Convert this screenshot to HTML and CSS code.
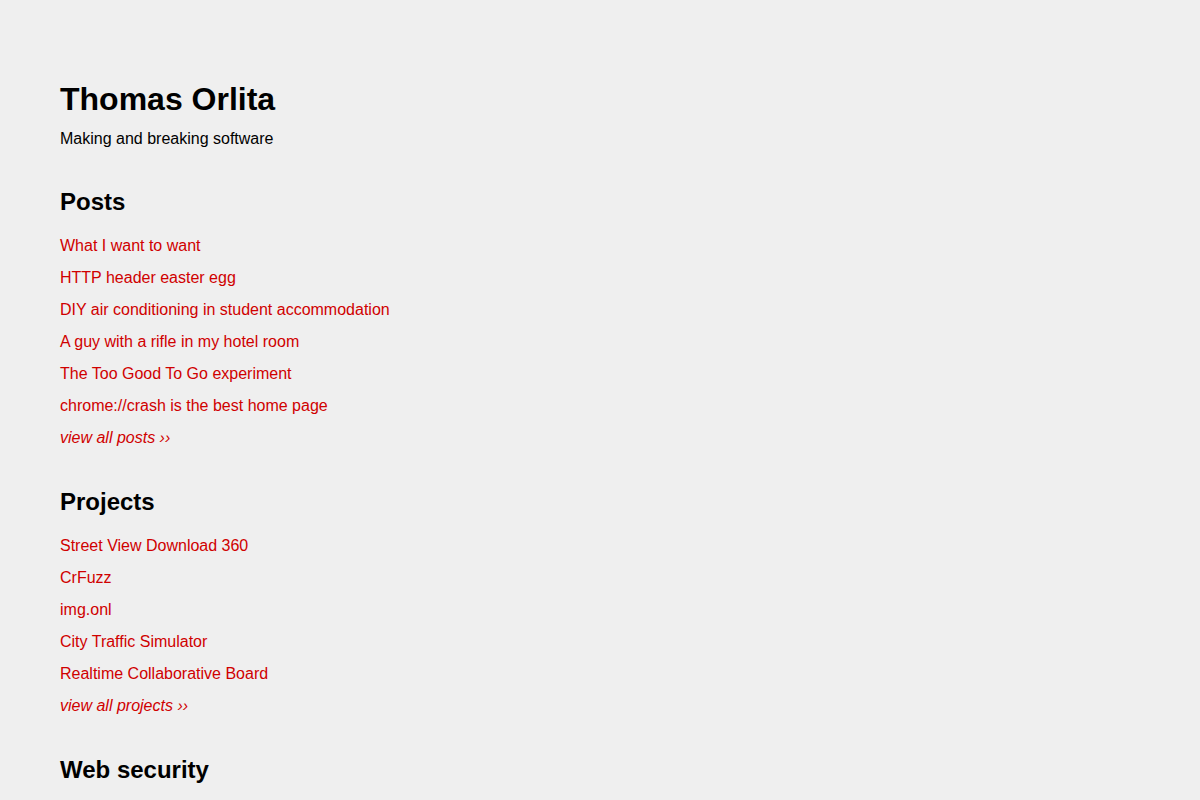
FILE: index.html
```html
<html lang="en">
<head>
  <meta charset="UTF-8" />
  <meta name="viewport" content="width=device-width, initial-scale=1.0">
  <title>Thomas Orlita</title>
  <link rel="stylesheet" href="styles.css">
</head>
<body>
  <header class="intro">
    <h1>Thomas Orlita</h1>
    <p>Making and breaking software</p>
  </header>

  <section>
    <h2>Posts</h2>
    <ul class="links">
      <li><a href="#">What I want to want</a></li>
      <li><a href="#">HTTP header easter egg</a></li>
      <li><a href="#">DIY air conditioning in student accommodation</a></li>
      <li><a href="#">A guy with a rifle in my hotel room</a></li>
      <li><a href="#">The Too Good To Go experiment</a></li>
      <li><a href="#">chrome://crash is the best home page</a></li>
      <li><a class="more" href="#">view all posts ››</a></li>
    </ul>
  </section>

  <section>
    <h2>Projects</h2>
    <ul class="links">
      <li><a href="#">Street View Download 360</a></li>
      <li><a href="#">CrFuzz</a></li>
      <li><a href="#">img.onl</a></li>
      <li><a href="#">City Traffic Simulator</a></li>
      <li><a href="#">Realtime Collaborative Board</a></li>
      <li><a class="more" href="#">view all projects ››</a></li>
    </ul>
  </section>

  <section>
    <h2>Web security</h2>
  </section>
</body>
</html>
```

FILE: styles.css
```css
body {
  background-color: #efefef;
  color: #000;
  font-family: "Liberation Sans", Arial, sans-serif;
  font-size: 16px;
  margin: 0;
  padding: 80px 60px;
}
.intro {
  padding-bottom: 5px;
}
h1 {
  font-size: 32px;
  line-height: 38px;
  margin: 0;
}
.intro p {
  margin: 11px 0 0;
  line-height: 20px;
}
h2 {
  font-size: 24px;
  line-height: 28px;
  margin: 34px 0 14px;
}
ul.links {
  list-style: none;
  padding: 0;
  margin: 0;
}
ul.links li {
  line-height: 32px;
}
a {
  color: #d00000;
  text-decoration: none;
}
a.more {
  font-style: italic;
}
```
